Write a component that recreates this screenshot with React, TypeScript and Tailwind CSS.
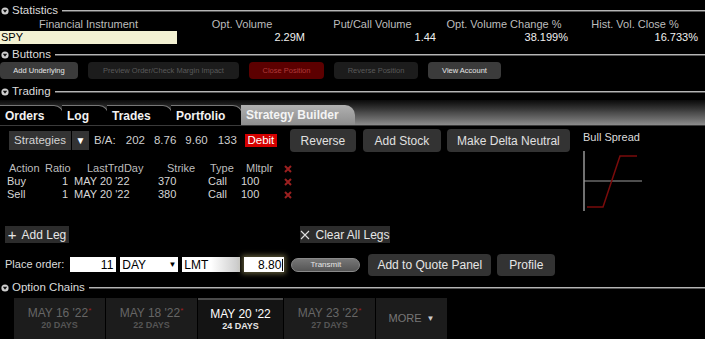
import React from 'react';

// Section header with collapse triangle and rule line
const SectionHeader = ({ title, className = '' }: { title: string; className?: string }) => (
  <div className={`flex h-[14px] items-center ${className}`}>
    <svg width="8" height="8" viewBox="0 0 8 8" className="ml-[1px]">
      <circle cx="4" cy="4" r="3.6" fill="#cfcfcf" />
      <polygon points="1.8,2.8 6.2,2.8 4,5.8" fill="#111" />
    </svg>
    <span className="ml-[3px] text-[11.5px] leading-none text-[#dcdcdc]">{title}</span>
    <div className="ml-[4px] h-[2px] flex-1 border-t border-[#b5b5b5] bg-[#555]" />
  </div>
);

const stats = [
  { label: 'Opt. Volume', value: '2.29M', w: 'w-[130px]' },
  { label: 'Put/Call Volume', value: '1.44', w: 'w-[131px]' },
  { label: 'Opt. Volume Change %', value: '38.199%', w: 'w-[132px]' },
  { label: 'Hist. Vol. Close %', value: '16.733%', w: 'w-[130px]' },
];

const topButtons = [
  { label: 'Add Underlying', w: 'w-[78px]', cls: 'bg-[#3b3b3b] text-[#e6e6e6]' },
  { label: 'Preview Order/Check Margin Impact', w: 'w-[151px]', cls: 'bg-[#1c1c1c] text-[#5a5a5a]' },
  { label: 'Close Position', w: 'w-[75px]', cls: 'bg-[#5c0000] text-[#b03a3a]' },
  { label: 'Reverse Position', w: 'w-[84px]', cls: 'bg-[#1c1c1c] text-[#5a5a5a]' },
  { label: 'View Account', w: 'w-[73px]', cls: 'bg-[#3b3b3b] text-[#e6e6e6]' },
];

const tabs = [
  { label: 'Orders', w: 'w-[64px]' },
  { label: 'Log', w: 'w-[47px]' },
  { label: 'Trades', w: 'w-[66px]' },
  { label: 'Portfolio', w: 'w-[72px]' },
];

const legs = [
  { action: 'Buy', ratio: '1', day: "MAY 20 '22", strike: '370', type: 'Call', mult: '100' },
  { action: 'Sell', ratio: '1', day: "MAY 20 '22", strike: '380', type: 'Call', mult: '100' },
];

const expiries = [
  { date: "MAY 16 '22", days: '20 DAYS', star: true, active: false },
  { date: "MAY 18 '22", days: '22 DAYS', star: true, active: false },
  { date: "MAY 20 '22", days: '24 DAYS', star: false, active: true },
  { date: "MAY 23 '22", days: '27 DAYS', star: true, active: false },
];

const RedX = () => (
  <svg width="8" height="8" viewBox="0 0 8 8">
    <path d="M1 1 L7 7 M7 1 L1 7" stroke="#9b2020" strokeWidth="2" />
  </svg>
);

const gridCols = 'grid grid-cols-[36px_29px_86px_49px_34px_42px_12px]';

export default function App() {
  return (
    <div className="h-[339px] w-[705px] overflow-hidden bg-black font-['Liberation_Sans',Arial,sans-serif] text-white">
      {/* Statistics */}
      <SectionHeader title="Statistics" className="mt-[4px]" />
      <div className="flex h-[13px] items-center text-[11px] leading-none text-[#bdbdbd]">
        <div className="w-[177px] text-center">Financial Instrument</div>
        {stats.map((s) => (
          <div key={s.label} className={`${s.w} text-center`}>{s.label}</div>
        ))}
      </div>
      <div className="flex h-[13px] items-center text-[11px] leading-none">
        <div className="flex h-[13px] w-[177px] items-center bg-[#f3f1d2] pl-[1px] text-black">SPY</div>
        {stats.map((s) => (
          <div key={s.label} className={`${s.w} pr-[2px] text-right text-[#f0f0f0]`}>{s.value}</div>
        ))}
      </div>

      {/* Buttons */}
      <SectionHeader title="Buttons" className="mt-[4px]" />
      <div className="flex h-[18px] items-start gap-[10px]">
        {topButtons.map((b) => (
          <div
            key={b.label}
            className={`flex h-[17px] items-center justify-center rounded-[4px] text-[7.5px] ${b.w} ${b.cls}`}
          >
            {b.label}
          </div>
        ))}
      </div>

      {/* Trading */}
      <SectionHeader title="Trading" className="mt-[5px]" />
      <div className="mt-[1px] flex h-[25px] items-end bg-gradient-to-b from-[#0a0a0a] via-[#4a4a4a] to-[#8c8c8c]">
        {tabs.map((t) => (
          <div
            key={t.label}
            className={`-mr-[2px] flex h-[20px] items-center rounded-tr-[10px] border-t border-r border-[#777] bg-black pl-[5px] text-[12px] font-bold text-[#f2f2f2] ${t.w}`}
          >
            {t.label}
          </div>
        ))}
        <div className="flex h-[20px] w-[114px] items-center rounded-tr-[10px] bg-gradient-to-b from-[#b0b0b0] to-[#8e8e8e] pl-[5px] text-[12px] font-bold text-[#f4f4f4]">
          Strategy Builder
        </div>
      </div>

      {/* Strategy builder */}
      <div className="flex h-[86px] border-t border-[#3a3a3a]">
        <div className="w-[583px]">
          <div className="mt-[3px] flex h-[23px] items-center text-[11.5px] text-[#cfcfcf]">
            <div className="ml-[9px] flex h-[19px] w-[62px] items-center justify-center bg-[#333] text-[#d4d4d4]">Strategies</div>
            <div className="ml-[1px] flex h-[19px] w-[17px] items-center justify-center bg-[#333] text-[10px] text-white">▼</div>
            <span className="ml-[5px]">B/A:</span>
            <span className="ml-[10px]">202</span>
            <span className="ml-[9px]">8.76</span>
            <span className="ml-[9px]">9.60</span>
            <span className="ml-[10px]">133</span>
            <div className="ml-[8px] flex h-[13px] w-[32px] items-center justify-center bg-[#d40000] text-white">Debit</div>
            <div className="ml-[13px] flex h-[23px] w-[66px] items-center justify-center rounded-[4px] bg-[#333] text-[12px] text-[#e0e0e0]">Reverse</div>
            <div className="ml-[7px] flex h-[23px] w-[78px] items-center justify-center rounded-[4px] bg-[#333] text-[12px] text-[#e0e0e0]">Add Stock</div>
            <div className="ml-[6px] flex h-[23px] w-[123px] items-center justify-center rounded-[4px] bg-[#333] text-[12px] text-[#e0e0e0]">Make Delta Neutral</div>
          </div>

          <div className="ml-[7px] mt-[10px] text-[11px] leading-[13px] text-[#d6d6d6]">
            <div className={`${gridCols} h-[13px] items-center text-[#bdbdbd]`}>
              <span className="pl-[2px]">Action</span>
              <span className="pl-[2px]">Ratio</span>
              <span className="pl-[15px]">LastTrdDay</span>
              <span className="pl-[9px]">Strike</span>
              <span className="pl-[3px]">Type</span>
              <span className="pl-[5px]">Mltplr</span>
              <span className="flex items-center pl-[1px]"><RedX /></span>
            </div>
            {legs.map((l) => (
              <div key={l.action} className={`${gridCols} h-[13px] items-center`}>
                <span>{l.action}</span>
                <span className="pr-[4px] text-right">{l.ratio}</span>
                <span className="pl-[2px]">{l.day}</span>
                <span>{l.strike}</span>
                <span className="pl-[1px]">{l.type}</span>
                <span>{l.mult}</span>
                <span className="flex items-center pl-[1px]"><RedX /></span>
              </div>
            ))}
          </div>
        </div>

        <div className="pt-[5px]">
          <div className="text-[11px] leading-[12px] text-[#dcdcdc]">Bull Spread</div>
          <svg width="62" height="64" viewBox="0 0 62 64" className="mt-[7px]">
            <line x1="1" y1="1" x2="1" y2="61" stroke="#bdbdbd" strokeWidth="1.2" />
            <line x1="1" y1="31" x2="59" y2="31" stroke="#9c9c9c" strokeWidth="1.2" />
            <polyline points="4,57 20,57 37,6 54,6" fill="none" stroke="#7a0b0b" strokeWidth="1.5" />
          </svg>
        </div>
      </div>

      {/* Leg buttons */}
      <div className="mt-[15px] flex h-[17px] items-center text-[12px] text-[#e6e6e6]">
        <div className="ml-[5px] flex h-[17px] w-[64px] items-center justify-center gap-[5px] bg-[#2c2c2c]">
          <span className="text-[15px] leading-none">+</span>
          <span>Add Leg</span>
        </div>
        <div className="ml-[231px] flex h-[17px] w-[90px] items-center justify-center gap-[5px] bg-[#2c2c2c]">
          <svg width="10" height="10" viewBox="0 0 10 10">
            <path d="M1 1 L9 9 M9 1 L1 9" stroke="#e0e0e0" strokeWidth="1.1" />
          </svg>
          <span>Clear All Legs</span>
        </div>
      </div>

      {/* Place order */}
      <div className="mt-[10px] flex h-[23px] items-center text-[12px]">
        <span className="ml-[5px] text-[11px] text-[#dcdcdc]">Place order:</span>
        <div className="ml-[6px] flex h-[15px] w-[46px] items-center justify-end bg-white pr-[3px] text-black">11</div>
        <div className="ml-[4px] flex h-[15px] w-[58px] items-center justify-between bg-white px-[2px] text-black">
          <span>DAY</span>
          <span className="text-[8px]">▼</span>
        </div>
        <div className="ml-[4px] flex h-[15px] w-[58px] items-center bg-gradient-to-r from-white via-white to-[#c8c8c8] pl-[2px] text-black">LMT</div>
        <div className="ml-[4px] flex h-[15px] w-[40px] items-center justify-end bg-white pr-[1px] text-black shadow-[0_0_5px_2px_rgba(200,190,120,0.45)]">
          8.80<span className="ml-[1px] h-[12px] w-px bg-black" />
        </div>
        <div className="ml-[7px] flex h-[14px] w-[69px] items-center justify-center rounded-full border border-[#8a8a8a] bg-gradient-to-b from-[#777] to-[#555] text-[8px] text-[#e4e4e4]">
          Transmit
        </div>
        <div className="ml-[8px] flex h-[22px] w-[123px] items-center justify-center rounded-[4px] bg-[#333] text-[#e6e6e6]">Add to Quote Panel</div>
        <div className="ml-[6px] flex h-[22px] w-[58px] items-center justify-center rounded-[4px] bg-[#333] text-[#e6e6e6]">Profile</div>
      </div>

      {/* Option chains */}
      <SectionHeader title="Option Chains" className="mt-[5px]" />
      <div className="ml-[14px] mt-[3px] flex h-[41px]">
        {expiries.map((e) => (
          <div
            key={e.date}
            className={`mr-px flex flex-col items-center justify-center ${
              e.active
                ? 'w-[85px] border-t-2 border-[#4a4a4a] bg-[#141414]'
                : 'w-[91px] bg-[#1c1c1c]'
            }`}
          >
            <span className={`text-[12px] leading-[14px] ${e.active ? 'text-white' : 'text-[#666]'}`}>
              {e.date}
              {e.star && <sup className="text-[8px] text-[#a02020]">*</sup>}
            </span>
            <span className={`text-[9px] font-bold leading-[11px] ${e.active ? 'text-[#e6e6e6]' : 'text-[#555]'}`}>
              {e.days}
            </span>
          </div>
        ))}
        <div className="flex w-[71px] items-center justify-center gap-[5px] bg-[#1c1c1c] text-[11px] text-[#777]">
          <span>MORE</span>
          <span className="text-[8px] text-[#ccc]">▼</span>
        </div>
      </div>
    </div>
  );
}
